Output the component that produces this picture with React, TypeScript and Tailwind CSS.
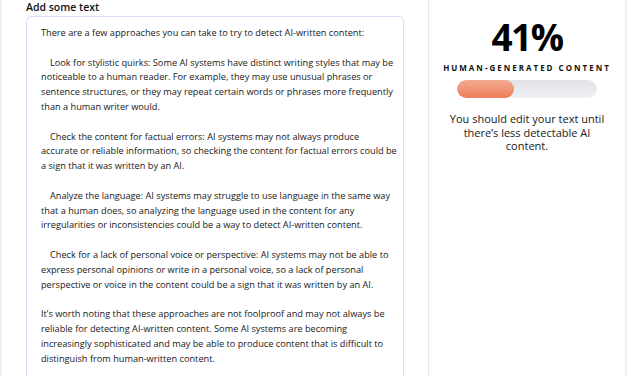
import React from "react";

const paragraphs: { indent: boolean; lines: string[] }[] = [
  { indent: false, lines: ["There are a few approaches you can take to try to detect AI-written content:"] },
  {
    indent: true,
    lines: [
      "Look for stylistic quirks: Some AI systems have distinct writing styles that may be",
      "noticeable to a human reader. For example, they may use unusual phrases or",
      "sentence structures, or they may repeat certain words or phrases more frequently",
      "than a human writer would.",
    ],
  },
  {
    indent: true,
    lines: [
      "Check the content for factual errors: AI systems may not always produce",
      "accurate or reliable information, so checking the content for factual errors could be",
      "a sign that it was written by an AI.",
    ],
  },
  {
    indent: true,
    lines: [
      "Analyze the language: AI systems may struggle to use language in the same way",
      "that a human does, so analyzing the language used in the content for any",
      "irregularities or inconsistencies could be a way to detect AI-written content.",
    ],
  },
  {
    indent: true,
    lines: [
      "Check for a lack of personal voice or perspective: AI systems may not be able to",
      "express personal opinions or write in a personal voice, so a lack of personal",
      "perspective or voice in the content could be a sign that it was written by an AI.",
    ],
  },
  {
    indent: false,
    lines: [
      "It\u2019s worth noting that these approaches are not foolproof and may not always be",
      "reliable for detecting AI-written content. Some AI systems are becoming",
      "increasingly sophisticated and may be able to produce content that is difficult to",
      "distinguish from human-written content.",
    ],
  },
];

export default function App() {
  return (
    <div
      className="w-[627px] h-[376px] overflow-hidden bg-white flex text-[#1c1c1c]"
      style={{ fontFamily: '"Open Sans", "Noto Sans", sans-serif' }}
    >
      <div className="w-[429px] h-[376px] overflow-hidden shrink-0 border-l-[2px] border-[#eef0f9] border-r border-r-[#e6e7ee] pl-[24px] pr-[24px] flex flex-col">
        <div className="h-[16px] shrink-0 text-[10.5px] font-semibold leading-[15px] text-[#111]">Add some text</div>
        <div className="h-[420px] shrink-0 border border-[#d8dcfa] rounded-[5px] pt-[9px] pl-[14px] pr-[4px] text-[9.2px] font-medium leading-[14.8px] text-[#181818]">
          {paragraphs.map((p, i) => (
            <div key={i} className={i === 0 ? "" : "mt-[14.8px]"}>
              {p.lines.map((l, j) => (
                <div key={j} className={"whitespace-nowrap " + (p.indent && j === 0 ? "pl-[9px]" : "")}>
                  {l}
                </div>
              ))}
            </div>
          ))}
        </div>
      </div>
      <div className="flex-1 border-r-[2px] border-[#eceef8] flex flex-col items-center pt-[16px]">
        <div className="text-[37px] font-bold leading-[42px] text-black tracking-[-1.5px]">41%</div>
        <div className="mt-[5px] text-[8px] font-bold tracking-[0.25em] leading-[10px] text-[#111]">
          HUMAN-GENERATED CONTENT
        </div>
        <div className="mt-[7px] w-[140px] h-[18px] rounded-full bg-gradient-to-b from-[#e2e3e8] to-[#f0f1f4] overflow-hidden">
          <div className="h-full rounded-full bg-gradient-to-b from-[#f3ab90] to-[#ee7b5b]" style={{ width: "41%" }} />
        </div>
        <div className="mt-[14px] w-[170px] text-center text-[11px] leading-[13.5px] text-[#1a1a1a]">
          You should edit your text until there&rsquo;s less detectable AI content.
        </div>
      </div>
    </div>
  );
}
